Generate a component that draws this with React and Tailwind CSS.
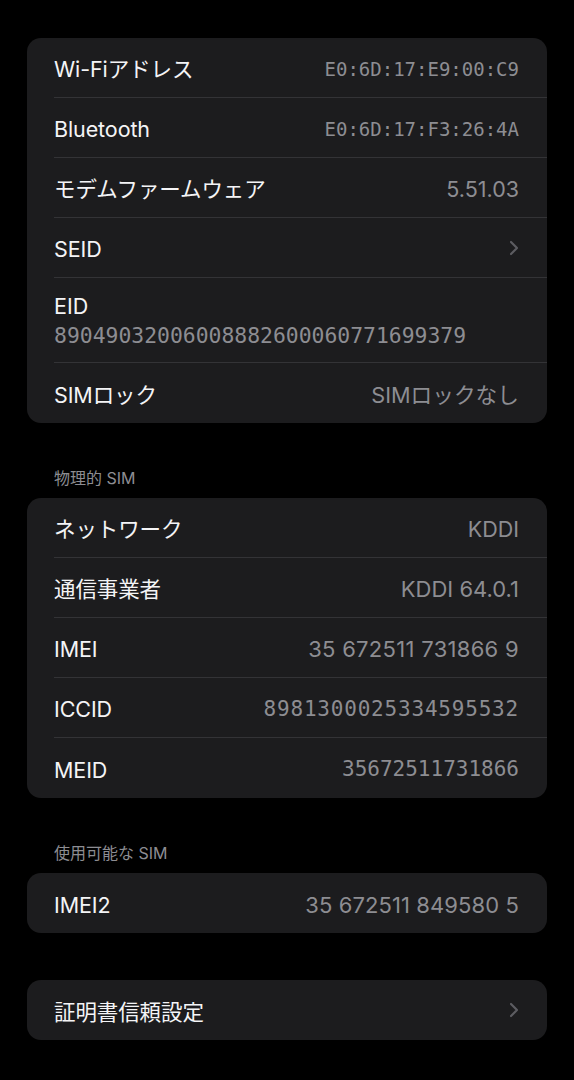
import React from 'react';

const sans = "font-['Inter','Noto_Sans_CJK_JP',sans-serif]";
const mono = "font-['DejaVu_Sans_Mono','Noto_Sans_CJK_JP',monospace]";

const Chevron = () => (
  <svg width="10" height="16" viewBox="0 0 10 16" fill="none" className="shrink-0">
    <path d="M2 2l6 6-6 6" stroke="#5c5c61" strokeWidth="2.2" strokeLinecap="round" strokeLinejoin="round" />
  </svg>
);

const Row = ({ label, value, valueClass = '', chevron, last }) => (
  <div className={`ml-[27px] h-[60px] flex items-center justify-between pr-[28px] pt-[4px] ${last ? '' : 'border-b border-[#333336]'}`}>
    <span className={`${sans} text-[21.5px] text-[#f4f4f6] tracking-[-0.1px]`}>{label}</span>
    {chevron ? (
      <span className="-mt-[4px]"><Chevron /></span>
    ) : (
      <span className={`text-[#8d8d92] ${valueClass}`}>{value}</span>
    )}
  </div>
);

const Card = ({ children, className = '' }) => (
  <div className={`bg-[#1c1c1e] rounded-[14px] overflow-hidden ${className}`}>{children}</div>
);

const Header = ({ children }) => (
  <div className={`${sans} pt-[45px] pb-[10px] pl-[27px] text-[16px] leading-[20px] text-[#8d8d92]`}>{children}</div>
);

export default function App() {
  return (
    <div className="min-h-screen w-[574px] bg-black px-[27px] pt-[38px] pb-[40px]">
      <Card>
        <Row label="Wi-Fiアドレス" value="E0:6D:17:E9:00:C9" valueClass={`${mono} text-[19px]`} />
        <Row label="Bluetooth" value="E0:6D:17:F3:26:4A" valueClass={`${mono} text-[19px]`} />
        <Row label="モデムファームウェア" value="5.51.03" valueClass={`${sans} text-[21.5px]`} />
        <Row label="SEID" chevron />
        <div className="ml-[27px] h-[85px] flex flex-col justify-center pr-[28px] pt-[2px] border-b border-[#333336]">
          <span className={`${sans} text-[21.5px] leading-[28px] text-[#f4f4f6]`}>EID</span>
          <span className={`${mono} text-[21.4px] leading-[31px] text-[#8d8d92]`}>89049032006008882600060771699379</span>
        </div>
        <Row label="SIMロック" value="SIMロックなし" valueClass={`${sans} text-[21.7px]`} last />
      </Card>

      <Header>物理的 SIM</Header>
      <Card>
        <Row label="ネットワーク" value="KDDI" valueClass={`${sans} text-[21.5px]`} />
        <Row label="通信事業者" value="KDDI 64.0.1" valueClass={`${sans} text-[22px]`} />
        <Row label="IMEI" value="35 672511 731866 9" valueClass={`${sans} text-[22px] tracking-[0.3px]`} />
        <Row label="ICCID" value="8981300025334595532" valueClass={`${mono} text-[21px] tracking-[0.8px]`} />
        <Row label="MEID" value="35672511731866" valueClass={`${mono} text-[21px]`} last />
      </Card>

      <Header>使用可能な SIM</Header>
      <Card>
        <Row label="IMEI2" value="35 672511 849580 5" valueClass={`${sans} text-[22px] tracking-[0.1px]`} last />
      </Card>

      <Card className="mt-[47px]">
        <Row label="証明書信頼設定" chevron last />
      </Card>
    </div>
  );
}
